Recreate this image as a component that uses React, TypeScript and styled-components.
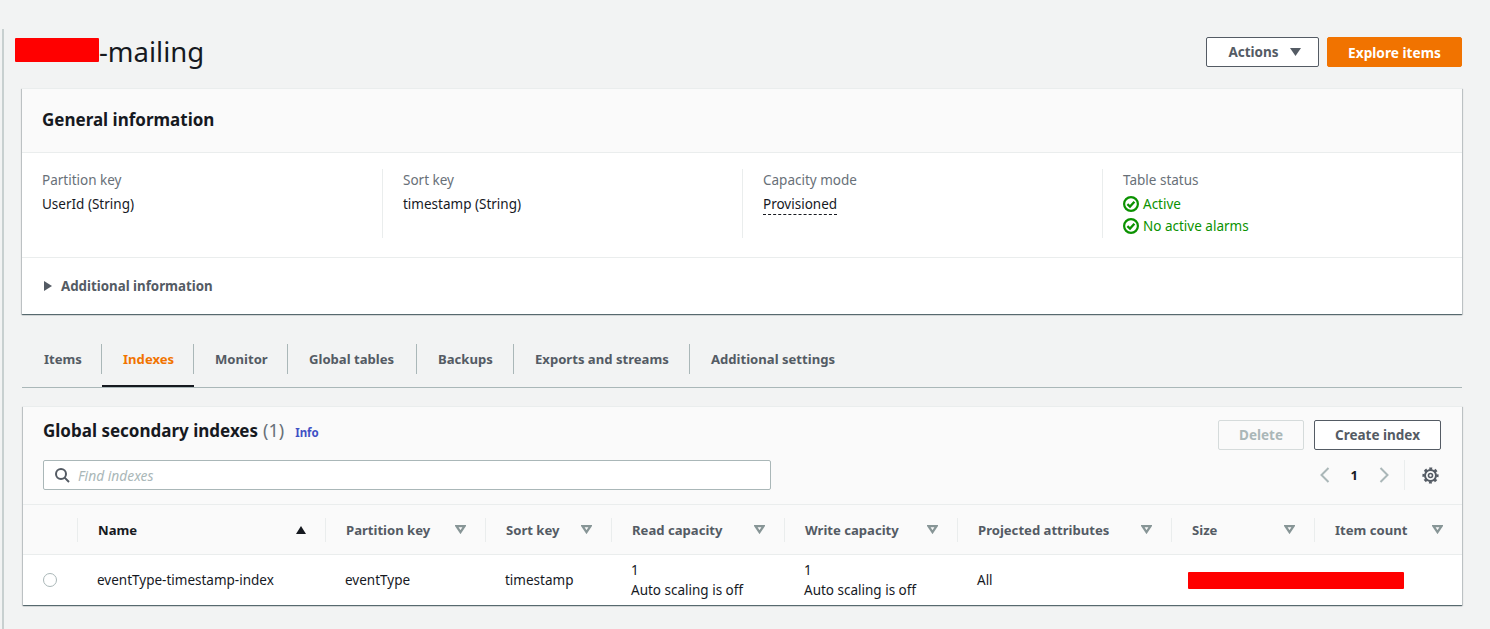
import React from "react"
import styled, { createGlobalStyle } from "styled-components"

const GlobalStyle = createGlobalStyle`
	html, body {
		margin: 0;
		padding: 0;
		background: #f2f3f3;
		font-family: "Noto Sans", "Open Sans", sans-serif;
		font-size: 14px;
		color: #16191f;
	}
`

const Page = styled.div`
	width: 1490px;
	height: 629px;
	box-sizing: border-box;
	overflow: hidden;
	padding-top: 29px;
`
const Rail = styled.div`
	height: 600px;
	margin-left: 2px;
	border-left: 2px solid #c8d0d0;
	box-sizing: border-box;
`
const Content = styled.div`
	width: 1462px;
	margin-left: -4px;
`

const Header = styled.div`
	display: flex;
	align-items: flex-start;
	justify-content: space-between;
	height: 59px;
	padding-left: 15px;
`
const Title = styled.h1`
	display: flex;
	align-items: center;
	margin: 1px 0 0;
	font-size: 27.5px;
	font-weight: 400;
	line-height: 44px;
`
const Redacted = styled.span<{ $w: number; $h: number }>`
	display: block;
	width: ${(p) => p.$w}px;
	height: ${(p) => p.$h}px;
	background: #ff0000;
	border-radius: 1px;
`
const TitleRedacted = styled(Redacted)`
	margin-bottom: 4px;
`
const Actions = styled.div`
	display: flex;
	gap: 8px;
	margin-top: 8px;
`
const Button = styled.button<{ $variant?: "primary" | "disabled"; $w: number }>`
	display: flex;
	align-items: center;
	justify-content: center;
	gap: 11px;
	width: ${(p) => p.$w}px;
	height: 30px;
	padding: 0;
	font-family: inherit;
	font-size: ${(p) => (p.$variant === "primary" ? 13.7 : 13.5)}px;
	font-weight: 700;
	border-radius: 2px;
	box-sizing: border-box;
	border: 1px solid ${(p) => (p.$variant === "primary" ? "#f17300" : p.$variant === "disabled" ? "#d5dbdb" : "#545b64")};
	background: ${(p) => (p.$variant === "primary" ? "#f17300" : p.$variant === "disabled" ? "#fafafa" : "#fff")};
	color: ${(p) => (p.$variant === "primary" ? "#fff" : p.$variant === "disabled" ? "#aab7b8" : "#545b64")};
`
const ActionsButton = styled(Button)`
	padding-left: 4px;
`

const Card = styled.section`
	background: #fff;
	border-top: 1px solid #eaeded;
	box-shadow: 0 1px 1px 0 rgba(0, 28, 36, 0.5), 1px 1px 1px 0 rgba(0, 28, 36, 0.15), -1px 1px 1px 0 rgba(0, 28, 36, 0.15);
`
const InfoCard = styled(Card)`
	margin-left: 22px;
	width: 1440px;
`
const InfoHead = styled.div`
	display: flex;
	align-items: center;
	height: 64px;
	box-sizing: border-box;
	padding: 0 0 1px 20px;
	background: #fafafa;
	border-bottom: 1px solid #eaeded;
`
const InfoTitle = styled.h2`
	margin: 0;
	font-size: 17px;
	font-weight: 700;
	line-height: 22px;
`
const InfoColumns = styled.div`
	display: grid;
	grid-template-columns: 360px 360px 360px 360px;
	height: 105px;
	box-sizing: border-box;
	padding-top: 16px;
	border-bottom: 1px solid #eaeded;
`
const InfoColumn = styled.div<{ $first?: boolean }>`
	height: 69px;
	padding-left: 20px;
	border-left: ${(p) => (p.$first ? "none" : "1px solid #eaeded")};
	box-sizing: border-box;
`
const Label = styled.div`
	color: #687078;
	font-size: 13.5px;
	line-height: 22px;
	margin-bottom: 2px;
`
const Value = styled.div`
	font-size: 13.5px;
	line-height: 22px;
`
const Dashed = styled.span`
	border-bottom: 1px dashed #16191f;
	padding-bottom: 1px;
`
const Status = styled.div`
	display: flex;
	align-items: center;
	gap: 4px;
	height: 22px;
	color: #0b9200;
	font-size: 13.5px;
`
const Expander = styled.div`
	display: flex;
	align-items: center;
	gap: 9px;
	height: 56px;
	padding-left: 22px;
	color: #545b64;
	font-size: 13.3px;
	font-weight: 700;
`

const Tabs = styled.div`
	display: flex;
	align-items: flex-end;
	margin: 30px 0 0 22px;
	width: 1440px;
	height: 43px;
	border-bottom: 1px solid #aab7b8;
`
const Tab = styled.div<{ $active?: boolean }>`
	height: 43px;
	box-sizing: border-box;
	color: ${(p) => (p.$active ? "#f17300" : "#545b64")};
	font-size: 13.1px;
	font-weight: 700;
	border-bottom: 2px solid ${(p) => (p.$active ? "#16191f" : "transparent")};
`
const TabLabel = styled.span<{ $first?: boolean; $last?: boolean; $w?: number }>`
	display: block;
	box-sizing: border-box;
	width: ${(p) => (p.$w ? `${p.$w}px` : "auto")};
	height: 30px;
	line-height: 30px;
	white-space: nowrap;
	padding-left: ${(p) => (p.$first ? 22 : 21)}px;
	border-right: ${(p) => (p.$last ? "none" : "1px solid #aab7b8")};
`

const IndexCard = styled(Card)`
	margin: 18px 0 0 23px;
	width: 1439px;
`
const IndexHead = styled.div`
	height: 98px;
	background: #fafafa;
	border-bottom: 1px solid #eaeded;
	box-sizing: border-box;
	display: grid;
	grid-template-columns: 1fr auto;
	padding: 11px 21px 0 20px;
`
const IndexTitle = styled.h2`
	display: flex;
	align-items: baseline;
	margin: 0;
	font-size: 17px;
	font-weight: 700;
	line-height: 24px;
`
const Count = styled.span`
	margin-left: 5px;
	color: #687078;
	font-size: 18px;
	font-weight: 400;
`
const InfoLink = styled.a`
	margin-left: 11px;
	color: #3f51c5;
	font-size: 11.5px;
	font-weight: 700;
`
const HeadLeft = styled.div`
	display: flex;
	flex-direction: column;
	gap: 15px;
`
const HeadRight = styled.div`
	display: flex;
	flex-direction: column;
	align-items: flex-end;
	gap: 10px;
	margin-top: 2px;
`
const ButtonRow = styled.div`
	display: flex;
	gap: 10px;
`
const Search = styled.div`
	display: flex;
	align-items: center;
	gap: 8px;
	width: 728px;
	height: 30px;
	padding-left: 10px;
	box-sizing: border-box;
	background: #fff;
	border: 1px solid #aab7b8;
	border-radius: 2px;
	color: #aab7b8;
	font-size: 13.8px;
	font-style: italic;
`
const Pager = styled.div`
	display: flex;
	align-items: center;
	height: 30px;
	margin-right: 2px;
`
const PageNumber = styled.span`
	margin: 0 21px;
	font-size: 13px;
	font-weight: 700;
`
const PagerDivider = styled.div`
	width: 1px;
	height: 30px;
	margin: 0 17px 0 15px;
	background: #eaeded;
`

const TABLE_COLUMNS = "55px 248px 160px 126px 173px 173px 214px 143px 147px"

const HeadRow = styled.div`
	display: grid;
	grid-template-columns: ${TABLE_COLUMNS};
	height: 49px;
	align-items: center;
	background: #fafafa;
	border-bottom: 1px solid #eaeded;
`
const HeadCell = styled.div<{ $sorted?: boolean }>`
	display: flex;
	align-items: center;
	justify-content: space-between;
	height: 24px;
	box-sizing: border-box;
	padding: 0 19px 0 20px;
	border-right: 1px solid #eaeded;
	color: ${(p) => (p.$sorted ? "#16191f" : "#545b64")};
	font-size: 13.1px;
	font-weight: 700;
	&:last-child {
		border-right: none;
	}
`
const BodyRow = styled.div`
	display: grid;
	grid-template-columns: ${TABLE_COLUMNS};
	height: 50px;
	align-items: center;
	font-size: 13.5px;
	line-height: 20px;
`
const Cell = styled.div`
	padding-left: 19px;
`
const Radio = styled.span`
	display: block;
	width: 12px;
	height: 12px;
	margin: 0 0 1px 20px;
	border: 1px solid #aab7b8;
	border-radius: 50%;
`
const SizeCell = styled(Cell)`
	grid-column: span 2;
	padding-left: 16px;
`

const CheckCircle = () => (
	<svg width="16" height="16" viewBox="0 0 16 16" fill="none" stroke="#0b9200" strokeWidth="2.2">
		<circle cx="8" cy="8" r="6.9" />
		<path d="M4.4 8.2 7 10.6l4.4-4.8" strokeWidth="2.3" />
	</svg>
)

const CaretDown = () => (
	<svg width="11" height="8" viewBox="0 0 11 8">
		<path d="M0 0h11L5.5 8z" fill="#545b64" />
	</svg>
)

const CaretRight = () => (
	<svg width="8" height="10" viewBox="0 0 8 10">
		<path d="M0 0l8 5-8 5z" fill="#545b64" />
	</svg>
)

const SortUp = () => (
	<svg width="10" height="8" viewBox="0 0 10 8">
		<path d="M5 0l5 8H0z" fill="#16191f" />
	</svg>
)

const SortNone = () => (
	<svg width="11" height="9" viewBox="0 0 11 9" fill="none" stroke="#879596" strokeWidth="2.2">
		<path d="M1.5 1.2h8L5.5 7.2z" />
	</svg>
)

const SearchIcon = () => (
	<svg width="16" height="16" viewBox="0 0 16 16" fill="none" stroke="#545b64" strokeWidth="2">
		<circle cx="7" cy="7" r="5" />
		<path d="M10.6 10.6 15 15" />
	</svg>
)

const Chevron = ({ right }: { right?: boolean }) => (
	<svg width="10" height="16" viewBox="0 0 10 16" fill="none" stroke="#aab7b8" strokeWidth="2">
		<path d={right ? "M1.5 1l7 7-7 7" : "M8.5 1l-7 7 7 7"} />
	</svg>
)

const Gear = () => (
	<svg width="17" height="17" viewBox="0 0 17 17" fill="none" stroke="#545b64">
		<circle cx="8.5" cy="8.5" r="5.5" strokeWidth="2" />
		<circle cx="8.5" cy="8.5" r="2" strokeWidth="1.6" />
		<circle cx="8.5" cy="8.5" r="7" strokeWidth="2.2" strokeDasharray="2.9 2.6" strokeDashoffset="1.45" />
	</svg>
)

const tabs = [
	{ label: "Items", width: 80 },
	{ label: "Indexes", width: 92 },
	{ label: "Monitor", width: 94 },
	{ label: "Global tables", width: 129 },
	{ label: "Backups", width: 97 },
	{ label: "Exports and streams", width: 176 },
	{ label: "Additional settings" },
]
const columns = ["Partition key", "Sort key", "Read capacity", "Write capacity", "Projected attributes", "Size", "Item count"]

export default function App() {
	return (
		<Page>
			<GlobalStyle />
			<Rail>
				<Content>
					<Header>
						<Title>
							<TitleRedacted $w={84} $h={24} />
							-mailing
						</Title>
						<Actions>
							<ActionsButton $w={113}>
								Actions
								<CaretDown />
							</ActionsButton>
							<Button $w={135} $variant="primary">
								Explore items
							</Button>
						</Actions>
					</Header>
					<InfoCard>
						<InfoHead>
							<InfoTitle>General information</InfoTitle>
						</InfoHead>
						<InfoColumns>
							<InfoColumn $first>
								<Label>Partition key</Label>
								<Value>UserId (String)</Value>
							</InfoColumn>
							<InfoColumn>
								<Label>Sort key</Label>
								<Value>timestamp (String)</Value>
							</InfoColumn>
							<InfoColumn>
								<Label>Capacity mode</Label>
								<Value>
									<Dashed>Provisioned</Dashed>
								</Value>
							</InfoColumn>
							<InfoColumn>
								<Label>Table status</Label>
								<Status>
									<CheckCircle />
									Active
								</Status>
								<Status>
									<CheckCircle />
									No active alarms
								</Status>
							</InfoColumn>
						</InfoColumns>
						<Expander>
							<CaretRight />
							Additional information
						</Expander>
					</InfoCard>
					<Tabs>
						{tabs.map((tab, idx) => (
							<Tab key={tab.label} $active={tab.label === "Indexes"}>
								<TabLabel $first={idx === 0} $last={idx === tabs.length - 1} $w={tab.width}>
									{tab.label}
								</TabLabel>
							</Tab>
						))}
					</Tabs>
					<IndexCard>
						<IndexHead>
							<HeadLeft>
								<IndexTitle>
									Global secondary indexes
									<Count>(1)</Count>
									<InfoLink>Info</InfoLink>
								</IndexTitle>
								<Search>
									<SearchIcon />
									Find indexes
								</Search>
							</HeadLeft>
							<HeadRight>
								<ButtonRow>
									<Button $w={86} $variant="disabled">
										Delete
									</Button>
									<Button $w={127}>Create index</Button>
								</ButtonRow>
								<Pager>
									<Chevron />
									<PageNumber>1</PageNumber>
									<Chevron right />
									<PagerDivider />
									<Gear />
								</Pager>
							</HeadRight>
						</IndexHead>
						<HeadRow>
							<HeadCell />
							<HeadCell $sorted>
								Name
								<SortUp />
							</HeadCell>
							{columns.map((column) => (
								<HeadCell key={column}>
									{column}
									<SortNone />
								</HeadCell>
							))}
						</HeadRow>
						<BodyRow>
							<Radio />
							<Cell>eventType-timestamp-index</Cell>
							<Cell>eventType</Cell>
							<Cell>timestamp</Cell>
							<Cell>
								1
								<br />
								Auto scaling is off
							</Cell>
							<Cell>
								1
								<br />
								Auto scaling is off
							</Cell>
							<Cell>All</Cell>
							<SizeCell>
								<Redacted $w={216} $h={17} />
							</SizeCell>
						</BodyRow>
					</IndexCard>
				</Content>
			</Rail>
		</Page>
	)
}
